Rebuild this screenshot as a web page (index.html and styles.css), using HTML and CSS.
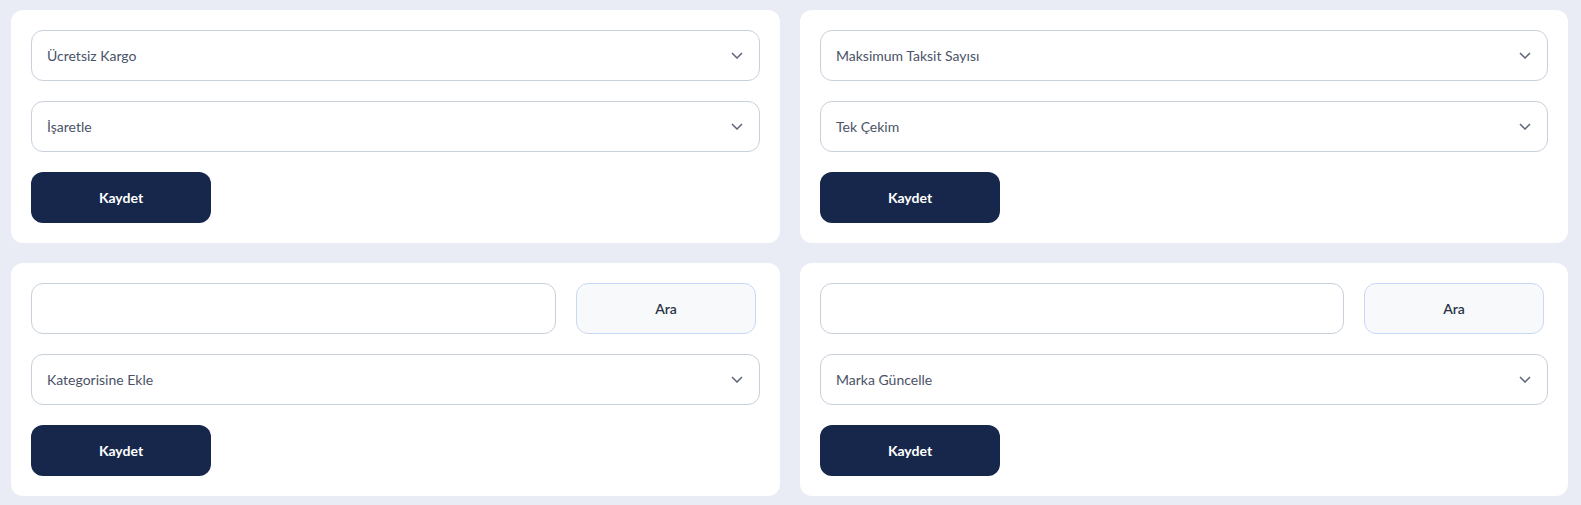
FILE: index.html
```html
<!DOCTYPE html>
<html lang="tr">
<head>
    <meta charset="UTF-8">
    <meta name="viewport" content="width=device-width, initial-scale=1.0">
    <title>Toplu İşlemler</title>
    <link rel="stylesheet" href="styles.css">
</head>
<body>
    <div class="grid">
        <div class="card">
            <div class="select">
                <span>Ücretsiz Kargo</span>
                <svg class="chevron" width="12" height="7" viewBox="0 0 12 7"><path d="M1 1l5 5 5-5"/></svg>
            </div>
            <div class="select">
                <span>İşaretle</span>
                <svg class="chevron" width="12" height="7" viewBox="0 0 12 7"><path d="M1 1l5 5 5-5"/></svg>
            </div>
            <button class="save">Kaydet</button>
        </div>

        <div class="card">
            <div class="select">
                <span>Maksimum Taksit Sayısı</span>
                <svg class="chevron" width="12" height="7" viewBox="0 0 12 7"><path d="M1 1l5 5 5-5"/></svg>
            </div>
            <div class="select">
                <span>Tek Çekim</span>
                <svg class="chevron" width="12" height="7" viewBox="0 0 12 7"><path d="M1 1l5 5 5-5"/></svg>
            </div>
            <button class="save">Kaydet</button>
        </div>

        <div class="card">
            <div class="search-row">
                <input type="text" class="search-input">
                <button class="search-btn">Ara</button>
            </div>
            <div class="select">
                <span>Kategorisine Ekle</span>
                <svg class="chevron" width="12" height="7" viewBox="0 0 12 7"><path d="M1 1l5 5 5-5"/></svg>
            </div>
            <button class="save">Kaydet</button>
        </div>

        <div class="card">
            <div class="search-row">
                <input type="text" class="search-input">
                <button class="search-btn">Ara</button>
            </div>
            <div class="select">
                <span>Marka Güncelle</span>
                <svg class="chevron" width="12" height="7" viewBox="0 0 12 7"><path d="M1 1l5 5 5-5"/></svg>
            </div>
            <button class="save">Kaydet</button>
        </div>
    </div>
</body>
</html>
```

FILE: styles.css
```css
body {
    margin: 0;
    background-color: #e9ecf4;
    font-family: Lato, "Noto Sans", sans-serif;
    font-size: 14px;
    color: #4a5367;
}
.grid {
    display: grid;
    grid-template-columns: 769px 768px;
    gap: 20px;
    padding: 10px 13px 11px 11px;
}
.card {
    background-color: white;
    border-radius: 12px;
    padding: 20px;
    display: flex;
    flex-direction: column;
    gap: 20px;
}
.select {
    height: 49px;
    border: 1px solid #c8d0dc;
    border-radius: 12px;
    display: flex;
    align-items: center;
    justify-content: space-between;
    padding: 0 16px 0 15px;
}
.chevron {
    fill: none;
    stroke: #5b6478;
    stroke-width: 1.5;
}
.search-row {
    display: flex;
    gap: 20px;
    margin-right: 4px;
}
.search-input {
    flex: 1;
    height: 51px;
    box-sizing: border-box;
    border: 1px solid #c8d0dc;
    border-radius: 12px;
    font: inherit;
    padding: 0 15px;
    outline: none;
}
.search-btn {
    width: 180px;
    height: 51px;
    border: 1px solid #c9d8f6;
    border-radius: 12px;
    background-color: #f8f9fa;
    font: inherit;
    font-weight: 600;
    color: #2b3446;
    cursor: pointer;
}
.save {
    width: 180px;
    height: 51px;
    border: none;
    border-radius: 12px;
    background-color: #16274b;
    color: white;
    font: inherit;
    font-weight: 700;
    cursor: pointer;
}
```
